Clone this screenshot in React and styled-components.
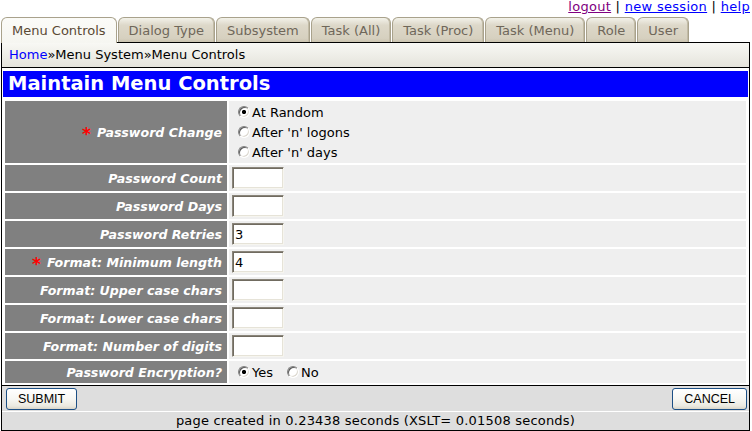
import React from 'react';
import styled, { createGlobalStyle } from 'styled-components';

const GlobalStyle = createGlobalStyle`
    html, body {
        margin: 0;
        padding: 0;
        background: #ffffff;
    }
    body {
        font-family: "DejaVu Sans", Verdana, sans-serif;
        font-size: 13px;
        color: #000000;
    }
    * {
        box-sizing: border-box;
    }
`;

const Page = styled.div`
    width: 752px;
    padding: 0 2px 0 1px;
`;

const TopLinks = styled.div`
    height: 17px;
    line-height: 14px;
    text-align: right;
    white-space: pre;
    letter-spacing: 0.3px;
`;

const TopLink = styled.a`
    color: ${(p) => (p.$visited ? '#800080' : '#0000ff')};
    text-decoration: underline;
`;

const TabBar = styled.div`
    display: flex;
    align-items: flex-start;
    gap: 1px;
    height: 25px;
`;

const Tab = styled.div`
    position: relative;
    z-index: ${(p) => (p.$active ? 1 : 0)};
    height: ${(p) => (p.$active ? '26px' : '25px')};
    padding: 0 10px;
    line-height: 25px;
    border: 1px solid #a9a28c;
    border-bottom: none;
    border-radius: 6px 6px 0 0;
    color: ${(p) => (p.$active ? '#5a4934' : '#6f675a')};
    background: ${(p) =>
        p.$active
            ? 'linear-gradient(#fbfbf8, #f6f6f1)'
            : 'linear-gradient(#f3f2ea 0, #ddd8c9 30%, #d6d0bf 85%, #cbc4b0 100%)'};
    box-shadow: ${(p) => (p.$active ? 'none' : 'inset -1px 0 0 #c2bba6')};
    white-space: nowrap;
`;

const Frame = styled.div`
    border: 1px solid #000000;
`;

const Breadcrumb = styled.div`
    height: 25px;
    padding-left: 7px;
    line-height: 24px;
    border-bottom: 1px solid #000000;
    background: linear-gradient(#f8f8f4, #e5e4dc);
`;

const CrumbLink = styled.a`
    color: #0000ff;
    text-decoration: none;
`;

const FormArea = styled.div`
    padding: 3px 1px 0 1px;
    background: #ffffff;
`;

const Title = styled.h1`
    margin: 0 0 2px 0;
    height: 26px;
    padding-left: 5px;
    line-height: 26px;
    font-size: 19.5px;
    font-weight: bold;
    color: #ffffff;
    background: #0000ff;
`;

const FieldGrid = styled.div`
    display: grid;
    grid-template-columns: 222px 1fr;
    gap: 2px;
    padding: 2px;
    background: #ffffff;
`;

const LabelCell = styled.div`
    display: flex;
    align-items: center;
    justify-content: flex-end;
    padding-right: 5px;
    background: #808080;
    color: #ffffff;
    font-size: 12.6px;
    font-weight: bold;
    font-style: italic;
    white-space: nowrap;
`;

const Required = styled.span`
    color: #ff0000;
    font-style: normal;
    font-size: 17px;
    line-height: 12px;
    margin: 4px 6px 0 0;
`;

const ValueCell = styled.div`
    display: flex;
    flex-direction: ${(p) => (p.$stack ? 'column' : 'row')};
    justify-content: ${(p) => (p.$stack ? 'center' : 'flex-start')};
    align-items: ${(p) => (p.$stack ? 'stretch' : 'center')};
    padding: 1px 3px;
    background: #efefef;
`;

const RadioLine = styled.label`
    display: flex;
    align-items: center;
    height: 20px;
`;

const RadioOption = styled.label`
    display: flex;
    align-items: center;
    height: 20px;
    margin-right: 8px;
`;

const Radio = styled.input.attrs({ type: 'radio' })`
    appearance: none;
    width: 12px;
    height: 12px;
    margin: 0 2px 0 6px;
    border-radius: 50%;
    border: 1px solid;
    border-color: #808080 #ffffff #ffffff #808080;
    box-shadow: inset 1px 1px 0 #5a5a5a, inset -1px -1px 0 #dcd8cf;
    background: #ffffff;

    &:checked {
        background: radial-gradient(circle at center, #000000 0 1.8px, #ffffff 2.4px);
    }
`;

const TextBox = styled.input.attrs({ type: 'text' })`
    width: 52px;
    height: 22px;
    margin: 1px 0;
    padding: 0 2px;
    border: 1px solid;
    border-color: #8a857a #f6f5ef #f6f5ef #8a857a;
    box-shadow: inset 1px 1px 0 #706b60, inset -1px -1px 0 #e6e3d8;
    background: #ffffff;
    font-family: "DejaVu Sans", Verdana, sans-serif;
    font-size: 13px;
    color: #000000;
    outline: none;
`;

const ButtonBar = styled.div`
    display: flex;
    justify-content: space-between;
    align-items: center;
    height: 26px;
    padding: 0 2px 0 4px;
    border-top: 1px solid #000000;
    background: #dedede;
`;

const Button = styled.button`
    height: 22px;
    padding: 0 11px;
    border: 1px solid #1c4f85;
    border-radius: 3px;
    background: linear-gradient(#ffffff 0, #f7f7f3 50%, #ebe9e0 85%, #d9d5c8 100%);
    font-family: "Liberation Sans", Arial, sans-serif;
    font-size: 12.5px;
    color: #000000;
`;

const Footer = styled.div`
    height: 19px;
    line-height: 18px;
    text-align: center;
    letter-spacing: 0.2px;
    border-top: 1px solid #ffffff;
    background: #dedede;
`;

const tabs = ['Menu Controls', 'Dialog Type', 'Subsystem', 'Task (All)', 'Task (Proc)', 'Task (Menu)', 'Role', 'User'];

const textFields = [
    { label: 'Password Count', value: '' },
    { label: 'Password Days', value: '' },
    { label: 'Password Retries', value: '3' },
    { label: 'Format: Minimum length', value: '4', required: true },
    { label: 'Format: Upper case chars', value: '' },
    { label: 'Format: Lower case chars', value: '' },
    { label: 'Format: Number of digits', value: '' },
];

const App = () => {
    return (
        <Page>
            <GlobalStyle />
            <TopLinks>
                <TopLink href="#" $visited>logout</TopLink>
                {' | '}
                <TopLink href="#">new session</TopLink>
                {' | '}
                <TopLink href="#">help</TopLink>
            </TopLinks>
            <TabBar>
                {tabs.map((t, i) => (
                    <Tab key={t} $active={i === 0}>{t}</Tab>
                ))}
            </TabBar>
            <Frame>
                <Breadcrumb>
                    <CrumbLink href="#">Home</CrumbLink>»Menu System»Menu Controls
                </Breadcrumb>
                <FormArea>
                    <Title>Maintain Menu Controls</Title>
                    <FieldGrid>
                        <LabelCell><Required>*</Required>Password Change</LabelCell>
                        <ValueCell $stack>
                            <RadioLine><Radio name="pwchange" defaultChecked />At Random</RadioLine>
                            <RadioLine><Radio name="pwchange" />After 'n' logons</RadioLine>
                            <RadioLine><Radio name="pwchange" />After 'n' days</RadioLine>
                        </ValueCell>
                        {textFields.map((f) => (
                            <React.Fragment key={f.label}>
                                <LabelCell>
                                    {f.required && <Required>*</Required>}
                                    {f.label}
                                </LabelCell>
                                <ValueCell>
                                    <TextBox defaultValue={f.value} />
                                </ValueCell>
                            </React.Fragment>
                        ))}
                        <LabelCell>Password Encryption?</LabelCell>
                        <ValueCell>
                            <RadioOption><Radio name="encrypt" defaultChecked />Yes</RadioOption>
                            <RadioOption><Radio name="encrypt" />No</RadioOption>
                        </ValueCell>
                    </FieldGrid>
                </FormArea>
                <ButtonBar>
                    <Button>SUBMIT</Button>
                    <Button>CANCEL</Button>
                </ButtonBar>
                <Footer>page created in 0.23438 seconds (XSLT= 0.01508 seconds)</Footer>
            </Frame>
        </Page>
    );
};

export default App;
